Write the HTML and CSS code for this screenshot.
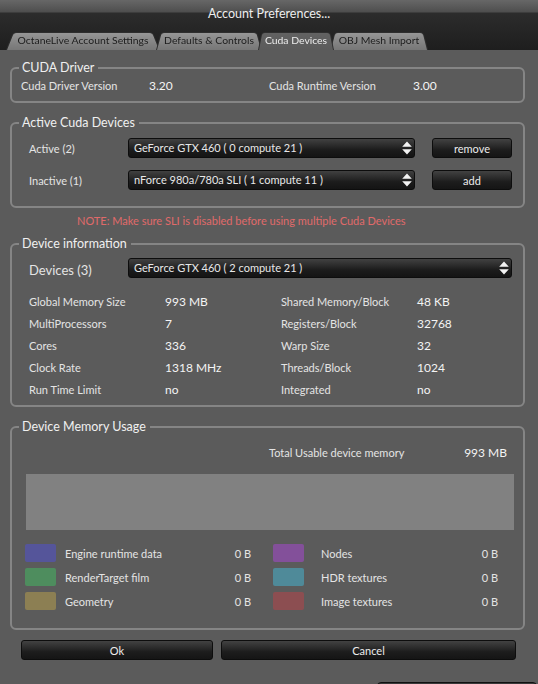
FILE: index.html
```html
<!DOCTYPE html>
<html lang="en">
<head>
    <meta charset="UTF-8">
    <title>Account Preferences...</title>
    <link rel="stylesheet" href="styles.css">
</head>
<body>
    <div class="window">
        <div class="header">
            <div class="title">Account Preferences...</div>
            <div class="tabs">
                <div class="tab tab-account">OctaneLive Account Settings</div>
                <div class="tab tab-defaults">Defaults &amp; Controls</div>
                <div class="tab tab-cuda active">Cuda Devices</div>
                <div class="tab tab-obj">OBJ Mesh Import</div>
            </div>
        </div>

        <div class="page">
            <!-- driver versions -->
            <fieldset class="group">
                <legend>CUDA Driver</legend>
                <div class="driver-row">
                    <span>Cuda Driver Version</span>
                    <span class="value">3.20</span>
                    <span>Cuda Runtime Version</span>
                    <span class="value">3.00</span>
                </div>
            </fieldset>

            <!-- active / inactive devices -->
            <fieldset class="group">
                <legend>Active Cuda Devices</legend>
                <div class="devices-body">
                    <div class="device-row">
                        <span class="row-label">Active (2)</span>
                        <div class="combo combo-short">
                            GeForce GTX 460 ( 0 compute 21 )
                            <svg class="combo-arrows" width="10" height="14" viewBox="0 0 10 14"><path d="M5 0.5 L9.8 5.8 H0.2 Z M0.2 8.2 H9.8 L5 13.5 Z" fill="#f2f2f2"/></svg>
                        </div>
                        <button class="btn btn-small">remove</button>
                    </div>
                    <div class="device-row">
                        <span class="row-label">Inactive (1)</span>
                        <div class="combo combo-short">
                            nForce 980a/780a SLI ( 1 compute 11 )
                            <svg class="combo-arrows" width="10" height="14" viewBox="0 0 10 14"><path d="M5 0.5 L9.8 5.8 H0.2 Z M0.2 8.2 H9.8 L5 13.5 Z" fill="#f2f2f2"/></svg>
                        </div>
                        <button class="btn btn-small">add</button>
                    </div>
                </div>
            </fieldset>

            <p class="note">NOTE: Make sure SLI is disabled before using multiple Cuda Devices</p>

            <!-- device information -->
            <fieldset class="group">
                <legend>Device information</legend>
                <div class="info-body">
                    <div class="device-row">
                        <span class="row-label big">Devices (3)</span>
                        <div class="combo combo-wide">
                            GeForce GTX 460 ( 2 compute 21 )
                            <svg class="combo-arrows" width="10" height="14" viewBox="0 0 10 14"><path d="M5 0.5 L9.8 5.8 H0.2 Z M0.2 8.2 H9.8 L5 13.5 Z" fill="#f2f2f2"/></svg>
                        </div>
                    </div>
                    <div class="info-grid">
                        <span>Global Memory Size</span><span class="value">993 MB</span>
                        <span>Shared Memory/Block</span><span class="value">48 KB</span>
                        <span>MultiProcessors</span><span class="value">7</span>
                        <span>Registers/Block</span><span class="value">32768</span>
                        <span>Cores</span><span class="value">336</span>
                        <span>Warp Size</span><span class="value">32</span>
                        <span>Clock Rate</span><span class="value">1318 MHz</span>
                        <span>Threads/Block</span><span class="value">1024</span>
                        <span>Run Time Limit</span><span class="value">no</span>
                        <span>Integrated</span><span class="value">no</span>
                    </div>
                </div>
            </fieldset>

            <!-- memory usage -->
            <fieldset class="group">
                <legend>Device Memory Usage</legend>
                <div class="memory-body">
                    <div class="total-row">
                        <span>Total Usable device memory</span>
                        <span class="value">993 MB</span>
                    </div>
                    <div class="memory-bar"></div>
                    <div class="usage-grid">
                        <div class="usage left"><span class="swatch engine"></span><span>Engine runtime data</span><span class="amount">0 B</span></div>
                        <div class="usage right"><span class="swatch nodes"></span><span>Nodes</span><span class="amount">0 B</span></div>
                        <div class="usage left"><span class="swatch film"></span><span>RenderTarget film</span><span class="amount">0 B</span></div>
                        <div class="usage right"><span class="swatch hdr"></span><span>HDR textures</span><span class="amount">0 B</span></div>
                        <div class="usage left"><span class="swatch geometry"></span><span>Geometry</span><span class="amount">0 B</span></div>
                        <div class="usage right"><span class="swatch image"></span><span>Image textures</span><span class="amount">0 B</span></div>
                    </div>
                </div>
            </fieldset>

            <div class="actions">
                <button class="btn btn-ok">Ok</button>
                <button class="btn btn-cancel">Cancel</button>
            </div>
            <div class="next-panel"></div>
        </div>
    </div>
</body>
</html>
```

FILE: styles.css
```css
* {
    margin: 0;
    padding: 0;
    box-sizing: border-box;
}

html,
body {
    background-color: #5b5b5b;
}

body {
    width: 538px;
    height: 684px;
    overflow: hidden;
    font-family: Lato, "Liberation Sans", sans-serif;
    font-size: 11px;
    color: #e4e4e4;
}

.header {
    height: 50px;
    background: linear-gradient(#676767 0, #4e4e4e 12px, #2c2c2c 13px, #1e1e1e 50px);
}

.title {
    height: 26px;
    line-height: 27px;
    text-align: center;
    font-size: 12.5px;
    color: #eeeeee;
}

.tabs {
    position: relative;
    z-index: 0;
    display: flex;
    height: 20px;
    margin-top: 4px;
    padding-left: 6px;
}

.tab {
    position: relative;
    height: 20px;
    line-height: 21px;
    text-align: center;
    font-size: 10.4px;
    color: #1c1c1c;
    margin-right: -4px;
}

.tab::before {
    content: "";
    position: absolute;
    inset: 0;
    z-index: -1;
    background: linear-gradient(#969696, #777777);
    border: 1px solid #2e2e2e;
    border-bottom: none;
    border-radius: 4px 4px 0 0;
    transform: perspective(30px) rotateX(9deg);
    transform-origin: bottom;
}

.tab-account { width: 154px; }
.tab-defaults { width: 106px; }
.tab-cuda { width: 76px; }
.tab-obj { width: 98px; }

.tab.active {
    color: #ececec;
    z-index: 1;
}

.tab.active::before {
    background: linear-gradient(#626262, #5b5b5b);
}

.page {
    padding: 10px 13px 0 10px;
}

.group {
    border: 2px solid #858585;
    border-radius: 6px;
    margin-bottom: 12px;
}

.group legend {
    margin-left: 7px;
    padding: 0 4px 0 3px;
    font-size: 12.5px;
    line-height: 16px;
    color: #f0f0f0;
}

.value {
    font-size: 12px;
    color: #f4f4f4;
}

/* CUDA Driver */
.driver-row {
    display: grid;
    grid-template-columns: 128px 120px 144px 1fr;
    align-items: center;
    height: 15px;
    margin: 2px 0 8px 9px;
}

/* Active Cuda Devices */
.devices-body {
    display: flex;
    flex-direction: column;
    gap: 12px;
    padding: 7px 11px 16px 17px;
}

.device-row {
    display: flex;
    align-items: center;
    height: 20px;
}

.row-label {
    width: 99px;
    padding-top: 1px;
}

.row-label.big {
    font-size: 13px;
    padding-top: 4px;
}

.combo {
    position: relative;
    height: 20px;
    line-height: 18px;
    padding-left: 5px;
    color: #e8e8e8;
    background: linear-gradient(#414141, #1c1c1c 60%, #141414);
    border: 1px solid #0d0d0d;
    border-radius: 3px;
}

.combo-short {
    width: 287px;
}

.combo-wide {
    width: 384px;
}

.combo-arrows {
    position: absolute;
    right: 2px;
    top: 2px;
}

.btn {
    height: 20px;
    font-family: inherit;
    font-size: 11px;
    color: #ececec;
    background: linear-gradient(#424242, #1d1d1d 60%, #151515);
    border: 1px solid #0d0d0d;
    border-radius: 3px;
}

.btn-small {
    width: 80px;
    margin-left: 17px;
}

.note {
    margin: -7px 0 7px 67px;
    line-height: 16px;
    color: #e06a6a;
}

/* Device information */
.info-body {
    padding: 6px 11px 5px 17px;
}

.info-grid {
    display: grid;
    grid-template-columns: 136px 116px 136px 1fr;
    grid-auto-rows: 22px;
    align-items: center;
    margin-top: 12px;
}

/* Device Memory Usage */
.memory-body {
    padding: 10px 9px 18px 14px;
}

.total-row {
    display: flex;
    justify-content: space-between;
    line-height: 16px;
    margin-left: 243px;
    padding-right: 7px;
}

.memory-bar {
    height: 56px;
    margin-top: 13px;
    background-color: #818181;
}

.usage-grid {
    display: grid;
    grid-template-columns: 226px 225px;
    column-gap: 22px;
    row-gap: 6px;
    margin-top: 14px;
    margin-left: -1px;
}

.usage {
    display: flex;
    align-items: center;
    height: 18px;
}

.usage.left .swatch {
    margin-right: 9px;
}

.usage.right .swatch {
    margin-right: 17px;
}

.amount {
    margin-left: auto;
}

.swatch {
    width: 31px;
    height: 18px;
    border-radius: 2px;
}

.swatch.engine { background-color: #55559a; }
.swatch.film { background-color: #4e8d5e; }
.swatch.geometry { background-color: #8c7f53; }
.swatch.nodes { background-color: #83509a; }
.swatch.hdr { background-color: #4f8a99; }
.swatch.image { background-color: #8c4e51; }

.actions {
    display: flex;
    gap: 8px;
    margin-top: -2px;
    padding-left: 11px;
}

.btn-ok {
    width: 192px;
}

.btn-cancel {
    width: 295px;
}

.next-panel {
    height: 24px;
    width: 160px;
    margin: 22px 0 0 367px;
    background: linear-gradient(#3a3a3a, #1a1a1a);
    border: 1px solid #101010;
    border-radius: 4px;
}
```
